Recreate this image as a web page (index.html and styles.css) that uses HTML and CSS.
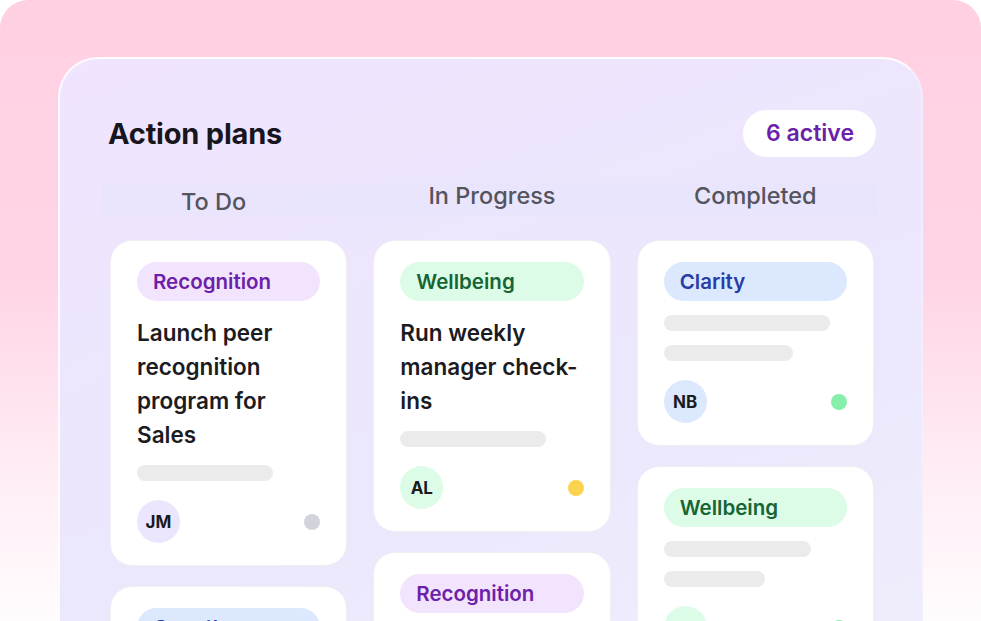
FILE: index.html
```html
<!DOCTYPE html>
<html lang="en">
  <head>
    <title>Action plans</title>
    <link rel="stylesheet" href="styles.css">
  </head>
  <body>
    <div class="frame">
      <div class="panel">
        <div class="panel-header">
          <p class="title">Action plans</p>
          <span class="count-pill">6 active</span>
        </div>

        <div class="board">
          <div class="column-labels">
            <p class="column-label to-do">To Do</p>
            <p class="column-label">In Progress</p>
            <p class="column-label">Completed</p>
          </div>

          <div class="columns">
            <!-- To Do -->
            <div class="column">
              <div class="card">
                <span class="tag tag-recognition">Recognition</span>
                <p class="card-title">Launch peer recognition program for Sales</p>
                <div class="bar" style="width: 136px"></div>
                <div class="card-footer">
                  <span class="avatar avatar-purple">JM</span>
                  <span class="dot dot-grey"></span>
                </div>
              </div>
              <div class="card">
                <span class="tag tag-clarity">Growth</span>
                <div class="bar" style="width: 150px"></div>
              </div>
            </div>

            <!-- In Progress -->
            <div class="column">
              <div class="card">
                <span class="tag tag-wellbeing">Wellbeing</span>
                <p class="card-title">Run weekly manager check-ins</p>
                <div class="bar" style="width: 146px"></div>
                <div class="card-footer">
                  <span class="avatar avatar-green">AL</span>
                  <span class="dot dot-yellow"></span>
                </div>
              </div>
              <div class="card">
                <span class="tag tag-recognition">Recognition</span>
                <div class="bar" style="width: 140px"></div>
              </div>
            </div>

            <!-- Completed -->
            <div class="column">
              <div class="card">
                <span class="tag tag-clarity">Clarity</span>
                <div class="bar" style="width: 166px"></div>
                <div class="bar" style="width: 129px"></div>
                <div class="card-footer">
                  <span class="avatar avatar-blue">NB</span>
                  <span class="dot dot-green"></span>
                </div>
              </div>
              <div class="card">
                <span class="tag tag-wellbeing">Wellbeing</span>
                <div class="bar" style="width: 147px"></div>
                <div class="bar" style="width: 101px"></div>
                <div class="card-footer">
                  <span class="avatar avatar-green">TK</span>
                  <span class="dot dot-green"></span>
                </div>
              </div>
            </div>
          </div>
        </div>
      </div>
    </div>
  </body>
</html>
```

FILE: styles.css
```css
body {
  margin: 0;
  background-color: white;
  font-family: Inter, "Noto Sans", Arial, sans-serif;
}
p {
  margin: 0;
}
.frame {
  height: 100vh;
  overflow: hidden;
  box-sizing: border-box;
  padding: 57px 58px 0 58px;
  border-radius: 28px 28px 0 0;
  background: linear-gradient(180deg, #ffd0e2 0%, #ffd4e7 45%, #ffeef6 78%, #fffcfd 100%);
}
.panel {
  min-height: 100%;
  box-sizing: border-box;
  padding: 51px 43px 0 42px;
  border: 2px solid rgba(255, 255, 255, 0.85);
  border-right-color: rgba(255, 255, 255, 0.3);
  border-bottom: none;
  border-radius: 40px 40px 0 0;
  background: linear-gradient(160deg, #f0e4fe 0%, #ebe7fc 55%, #f0eefc 100%);
}
.panel-header {
  display: flex;
  justify-content: space-between;
  align-items: center;
  padding: 0 2px 0 6px;
}
.title {
  font-size: 29px;
  font-weight: 700;
  color: #17151d;
  letter-spacing: -0.2px;
}
.count-pill {
  background-color: white;
  border-radius: 24px;
  height: 47px;
  line-height: 47px;
  padding: 0 22px 0 23px;
  font-size: 23px;
  font-weight: 600;
  color: #6b21a8;
}
.board {
  margin-top: 26px;
}
.column-labels {
  display: grid;
  grid-template-columns: 1fr 1fr 1fr;
  gap: 26px;
  height: 33px;
  padding: 0 4px 0 8px;
  background-color: rgba(228, 228, 252, 0.45);
}
.column-label {
  text-align: center;
  font-size: 23.5px;
  font-weight: 500;
  line-height: 26px;
  color: #55545c;
}
.column-label.to-do {
  margin: 6px 30px 0 0;
}
.columns {
  display: grid;
  grid-template-columns: 1fr 1fr 1fr;
  gap: 26px;
  padding: 24px 4px 0 8px;
}
.column {
  display: flex;
  flex-direction: column;
  gap: 20px;
}
.card {
  background-color: white;
  border: 1px solid #f0edf3;
  border-radius: 22px;
  padding: 21px 26px 22px 26px;
}
.tag {
  display: block;
  height: 39px;
  line-height: 39px;
  border-radius: 20px;
  padding: 0 16px;
  font-size: 20.5px;
  font-weight: 600;
}
.tag-recognition {
  background-color: #f3e4fd;
  color: #6b21a8;
}
.tag-wellbeing {
  background-color: #dcfce7;
  color: #166534;
}
.tag-clarity {
  background-color: #dbe8fe;
  color: #2a3ca6;
}
.card-title {
  margin-top: 15px;
  font-size: 22.5px;
  font-weight: 600;
  line-height: 34px;
  color: #1c1b22;
}
.bar {
  height: 16px;
  border-radius: 8px;
  background-color: #ebebeb;
  margin-top: 14px;
}
.card-title + .bar {
  margin-top: 13px;
}
.card-footer {
  display: flex;
  justify-content: space-between;
  align-items: center;
  margin-top: 19px;
}
.avatar {
  width: 43px;
  height: 43px;
  border-radius: 50%;
  display: flex;
  align-items: center;
  justify-content: center;
  font-size: 17px;
  font-weight: 700;
  color: #1a1a1f;
}
.avatar-purple {
  background-color: #ebe5fe;
}
.avatar-green {
  background-color: #dcfce7;
}
.avatar-blue {
  background-color: #dbe8fe;
}
.dot {
  width: 16px;
  height: 16px;
  border-radius: 50%;
}
.dot-grey {
  background-color: #d1d5db;
}
.dot-yellow {
  background-color: #fcd34d;
}
.dot-green {
  background-color: #86efac;
}
```
